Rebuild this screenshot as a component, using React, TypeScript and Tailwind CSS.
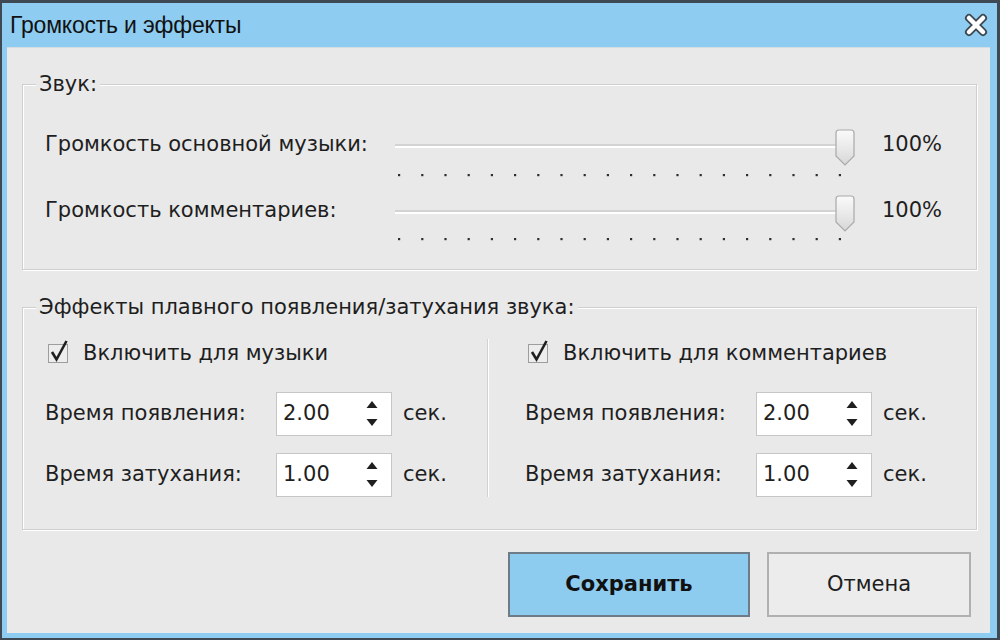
import React from "react";

const FONT = "font-['DejaVu_Sans','Noto_Sans',sans-serif]";

function CloseIcon() {
  return (
    <svg width="26" height="24" viewBox="0 0 26 24" aria-hidden="true">
      <g strokeLinecap="round">
        <path d="M6 5 L20 19 M20 5 L6 19" stroke="#3d4852" strokeWidth="8" />
        <path d="M6 5 L20 19 M20 5 L6 19" stroke="#ffffff" strokeWidth="4.5" />
      </g>
    </svg>
  );
}

function Slider({ dotsY }: { dotsY: number }) {
  const dots = Array.from({ length: 20 }, (_, i) => 3 + i * 23.2);
  return (
    <svg width="470" height="66" viewBox="0 0 470 66" aria-hidden="true">
      <defs>
        <linearGradient id="thumb" x1="0" y1="0" x2="0" y2="1">
          <stop offset="0" stopColor="#fafafa" />
          <stop offset="0.6" stopColor="#e6e6e6" />
          <stop offset="1" stopColor="#d6d6d6" />
        </linearGradient>
      </defs>
      <rect x="0" y="32" width="450" height="2" fill="#d3d3d3" />
      <rect x="0" y="34" width="450" height="2" fill="#ffffff" />
      <path
        d="M441 21 Q441 18 444 18 H456 Q459 18 459 21 V44 L450 53 L441 44 Z"
        fill="url(#thumb)"
        stroke="#a9a9a9"
        strokeWidth="1.2"
      />
      {dots.map((x) => (
        <rect key={x} x={x} y={dotsY} width="2.2" height="2.2" fill="#2e2e2e" />
      ))}
    </svg>
  );
}

function Check() {
  return (
    <svg width="24" height="26" viewBox="0 0 24 26" aria-hidden="true">
      <rect x="1.5" y="6.5" width="19" height="18" fill="#ededed" stroke="#9d9d9d" />
      <path d="M5 14 L9.5 21.5 L19.5 3" fill="none" stroke="#1f1f1f" strokeWidth="2.6" />
    </svg>
  );
}

function Spin() {
  return (
    <svg width="14" height="30" viewBox="0 0 14 30" aria-hidden="true">
      <path d="M7 2 L12.5 9 H1.5 Z" fill="#1f1f1f" />
      <path d="M1.5 20 H12.5 L7 27 Z" fill="#1f1f1f" />
    </svg>
  );
}

function Field({ label, value }: { label: string; value: string }) {
  return (
    <div className="flex items-center">
      <span className="w-[231px]">{label}</span>
      <div className="flex h-[44px] w-[116px] items-center justify-between border border-[#c6c6c6] bg-white pl-[6px] pr-[12px]">
        <span>{value}</span>
        <Spin />
      </div>
      <span className="ml-[11px]">сек.</span>
    </div>
  );
}

function FadeColumn({ title }: { title: string }) {
  return (
    <div className="flex flex-col">
      <div className="flex h-[30px] items-center">
        <span className="mb-[6px] ml-[2px]">
          <Check />
        </span>
        <span className="ml-[12px]">{title}</span>
      </div>
      <div className="mt-[23px]">
        <Field label="Время появления:" value="2.00" />
      </div>
      <div className="mt-[17px]">
        <Field label="Время затухания:" value="1.00" />
      </div>
    </div>
  );
}

const groupBox =
  "border border-[#cfcfcf] p-0 shadow-[inset_1px_1px_0_#ffffff,1px_1px_0_#ffffff]";
const legend = "ml-[13px] bg-[#e9e9e9] px-[3px] leading-[24px]";

export default function App() {
  return (
    <div className={`h-[640px] w-[1000px] overflow-hidden bg-[#3e4954] pb-[2px] pl-[2px] pr-[3px] pt-[3px] text-[21px] text-[#1e1e1e] ${FONT}`}>
      <div className="flex h-full flex-col bg-[#8ecdf1] pb-[5px] pl-[5px] pr-[7px]">
        <div className="flex h-[44px] shrink-0 items-center justify-between pl-[3px] pr-[1px]">
          <span className="font-['Liberation_Sans',sans-serif] text-[23px] tracking-[-0.2px] text-[#111]">
            Громкость и эффекты
          </span>
          <CloseIcon />
        </div>

        <div className="flex flex-1 flex-col border-t border-[#d6dde2] bg-[#e9e9e9] px-[15px] pt-[24px]">
          <fieldset className={groupBox + " mr-[-2px]"}>
            <legend className={legend}>Звук:</legend>
            <div className="pb-[25px] pl-[22px] pt-[16px]">
              <div className="flex h-[66px] items-center">
                <span className="w-[350px]">Громкость основной музыки:</span>
                <Slider dotsY={62} />
                <span className="ml-[17px]">100%</span>
              </div>
              <div className="flex h-[66px] items-center">
                <span className="w-[350px]">Громкость комментариев:</span>
                <Slider dotsY={60} />
                <span className="ml-[17px]">100%</span>
              </div>
            </div>
          </fieldset>

          <fieldset className={groupBox + " mr-[-2px] mt-[25px]"}>
            <legend className={legend}>Эффекты плавного появления/затухания звука:</legend>
            <div className="grid grid-cols-[442px_2px_1fr] pb-[32px] pl-[22px] pt-[20px]">
              <FadeColumn title="Включить для музыки" />
              <div className="flex">
                <div className="w-px bg-[#d2d2d2]" />
                <div className="w-px bg-[#ffffff]" />
              </div>
              <div className="pl-[36px]">
                <FadeColumn title="Включить для комментариев" />
              </div>
            </div>
          </fieldset>

          <div className="mt-[22px] flex justify-end gap-[17px] pr-[4px]">
            <button className="h-[65px] w-[242px] border-2 border-[#6f7c87] bg-[#8dcbef] text-[21px] font-bold text-[#111]">
              Сохранить
            </button>
            <button className="h-[65px] w-[204px] border-2 border-[#b0b0b0] bg-[#ececec] text-[21px] text-[#1e1e1e]">
              Отмена
            </button>
          </div>
        </div>
      </div>
    </div>
  );
}
